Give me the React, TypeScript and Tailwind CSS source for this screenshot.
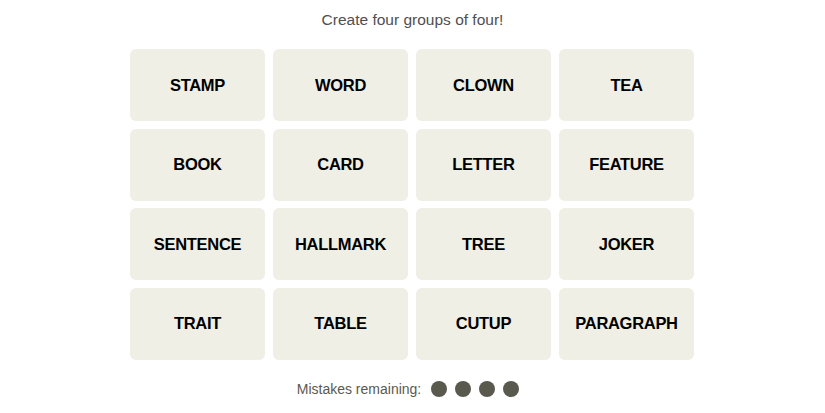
const words = [
  "STAMP", "WORD", "CLOWN", "TEA",
  "BOOK", "CARD", "LETTER", "FEATURE",
  "SENTENCE", "HALLMARK", "TREE", "JOKER",
  "TRAIT", "TABLE", "CUTUP", "PARAGRAPH",
];

export default function App() {
  return (
    <div className="w-[825px] h-[413px] bg-white flex flex-col items-center font-['Liberation_Sans',Arial,sans-serif]">
      <p className="mt-[10px] h-[20px] leading-[20px] text-[15.5px] text-[#4f4f4f]">
        Create four groups of four!
      </p>
      <div className="mt-[19px] ml-[-1px] grid grid-cols-[repeat(4,135px)] auto-rows-[72px] gap-x-[8px] gap-y-[7.5px]">
        {words.map((w) => (
          <button
            key={w}
            className="bg-[#efefe6] rounded-[6px] flex items-center justify-center text-[16.5px] font-bold text-black tracking-[-0.3px]"
          >
            {w}
          </button>
        ))}
      </div>
      <div className="mt-[19px] ml-[-9px] flex items-center gap-[10px] text-[14px] text-[#5a594e]">
        <span>Mistakes remaining:</span>
        <div className="flex gap-[8px]">
          <span className="w-[16px] h-[16px] rounded-full bg-[#5a594e]" />
          <span className="w-[16px] h-[16px] rounded-full bg-[#5a594e]" />
          <span className="w-[16px] h-[16px] rounded-full bg-[#5a594e]" />
          <span className="w-[16px] h-[16px] rounded-full bg-[#5a594e]" />
        </div>
      </div>
    </div>
  );
}
